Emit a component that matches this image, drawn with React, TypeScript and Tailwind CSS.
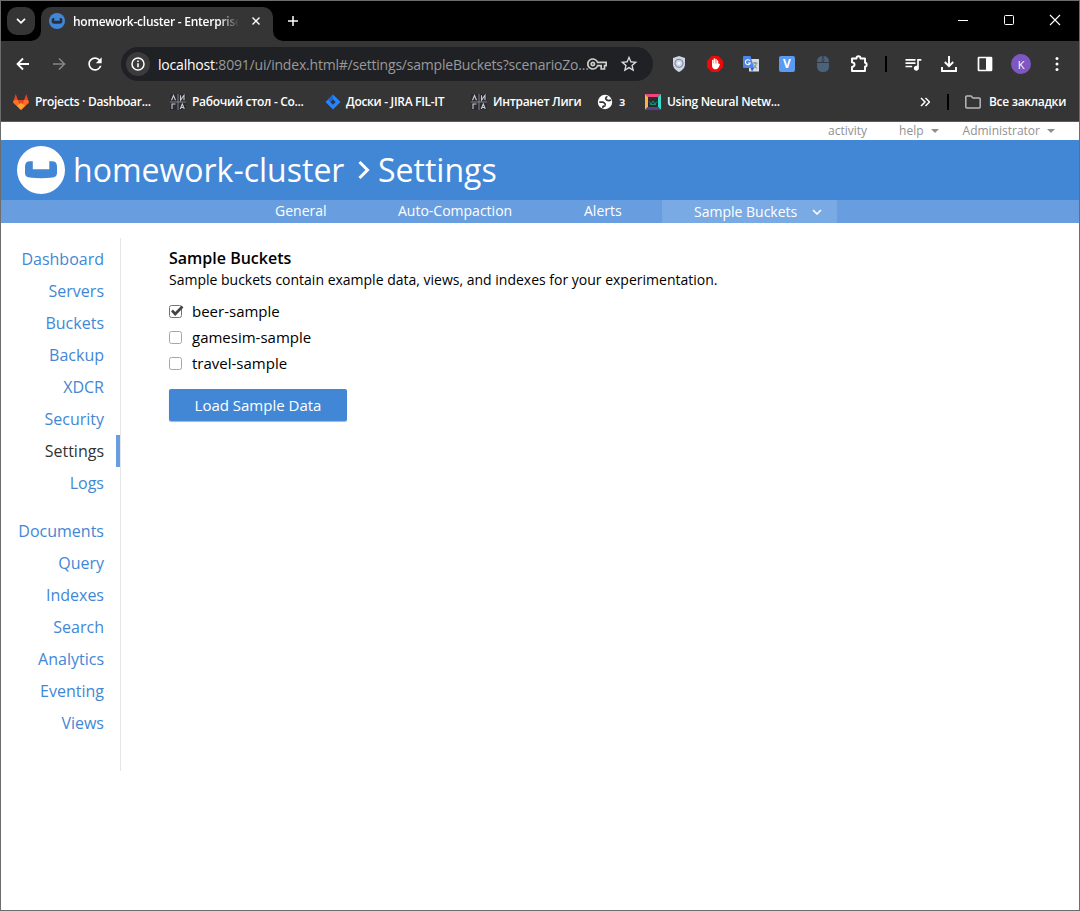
import type { ReactNode } from "react";
import { MdRefresh, MdStarBorder, MdOutlineVpnKey, MdQueueMusic } from "react-icons/md";

function Cell({ children }: { children: ReactNode }) {
  return <div className="flex h-9 w-9 shrink-0 items-center justify-center">{children}</div>;
}

function Logo({ disc, cup, className }: { disc: string; cup: string; className: string }) {
  return (
    <svg viewBox="0 0 48 48" className={className}>
      <circle cx="24" cy="24" r="24" fill={disc} />
      <path
        d="M8 20.5q0-5.2 5-5.2h2.800v8h16.500v-8H35q5 0 5 5.200V27q0 4-4.500 4.500-11.500 1.300-23 0Q8 31 8 27Z"
        fill={cup}
      />
    </svg>
  );
}

function LigaIcon() {
  return (
    <svg viewBox="0 0 16 16" className="h-4 w-4 shrink-0" fill="none" stroke="#c9c9cd">
      <rect width="16" height="16" fill="#2a2a32" stroke="none" />
      <path d="M8 0v16M0 8h16" stroke="#8a8a90" strokeWidth="0.9" />
      <path d="M1.500 6.300 3.500 1.500l2 4.800M10.500 1.300v5l3.500-5v5M2 15v-5h3.500M10.300 15l2-5 2 5M11 13.500h2.600" strokeWidth="1.100" />
    </svg>
  );
}

function TitleBar() {
  return (
    <div className="flex h-10 shrink-0 bg-black text-white">
      <div className="mt-1.5 ml-1.5 flex h-7 w-7 items-center justify-center rounded-[10px] bg-[#353535]">
        <svg viewBox="0 0 10 10" className="h-2.5 w-2.5" fill="none" stroke="white" strokeWidth="1.700">
          <path d="M1 2.800 5 6.800 9 2.800" />
        </svg>
      </div>
      <div className="relative mt-1.5 ml-1.5 flex h-[34px] w-[232px] rounded-t-[10px] bg-[#353535]">
        <svg viewBox="0 0 10 10" className="absolute bottom-0 -left-2.5 h-2.5 w-2.5" fill="#353535">
          <path d="M10 0A10 10 0 0 1 0 10h10Z" />
        </svg>
        <svg viewBox="0 0 10 10" className="absolute -right-2.5 bottom-0 h-2.5 w-2.5" fill="#353535">
          <path d="M0 0a10 10 0 0 0 10 10H0Z" />
        </svg>
        <Logo disc="#4287d6" cup="#25303f" className="mt-1.5 ml-2 h-4 w-4" />
        <div className="mt-1.5 ml-2 h-[18px] w-[166px] overflow-hidden text-[12px] leading-[18px] font-semibold tracking-[-0.25px] whitespace-nowrap [mask-image:linear-gradient(to_right,black_88%,transparent)]">
          homework-cluster - Enterprise
        </div>
        <svg viewBox="0 0 8 8" className="mt-2.5 ml-[13px] h-2 w-2" fill="none" stroke="white" strokeWidth="1.400">
          <path d="m.5.5 7 7M7.500.5l-7 7" />
        </svg>
      </div>
      <svg viewBox="0 0 10 10" className="mt-[15px] ml-[15px] h-2.5 w-2.5" fill="none" stroke="white" strokeWidth="1.500">
        <path d="M5 0v10M0 5h10" />
      </svg>
      <div className="ml-auto flex pr-[1px]">
        <svg viewBox="0 0 46 40" className="h-10 w-[46px]" stroke="white">
          <path d="M18 19.500h10" />
        </svg>
        <svg viewBox="0 0 46 40" className="h-10 w-[46px]" stroke="white" fill="none">
          <rect x="18.500" y="14.500" width="9" height="9" rx="1" />
        </svg>
        <svg viewBox="0 0 46 40" className="h-10 w-[46px]" stroke="white" fill="none">
          <path d="m18 14 10 10m0-10L18 24" strokeWidth="1.100" />
        </svg>
      </div>
    </div>
  );
}

function Toolbar() {
  return (
    <div className="flex h-[46px] shrink-0 items-center bg-[#353535] pl-1 text-white">
      <Cell>
        <svg viewBox="0 0 16 16" className="h-4 w-4" fill="none" stroke="white" strokeWidth="1.800">
          <path d="M14 8H3M8 2.500 2.500 8 8 13.500" />
        </svg>
      </Cell>
      <Cell>
        <svg viewBox="0 0 16 16" className="h-4 w-4" fill="none" stroke="#868686" strokeWidth="1.600">
          <path d="M2 8h11M8 2.500 13.500 8 8 13.500" />
        </svg>
      </Cell>
      <Cell>
        <MdRefresh className="h-5 w-5" />
      </Cell>
      <div className="ml-2 flex h-[34px] w-[532px] items-center rounded-full bg-[#202124] pl-[5px]">
        <div className="flex h-6 w-6 items-center justify-center rounded-full bg-[#3b3b3b]">
          <svg viewBox="0 0 14 14" className="h-3.5 w-3.5" fill="none" stroke="white" strokeWidth="1.500">
            <circle cx="7" cy="7" r="6" />
            <path d="M7 6.300v4M7 3.500V5" strokeWidth="1.600" />
          </svg>
        </div>
        <div className="ml-2 w-[421px] text-[14px] tracking-[-0.2px] whitespace-nowrap text-[#9a9a9a]">
          <span className="text-white">localhost</span>:8091/ui/index.html#/settings/sampleBuckets?scenarioZo...
        </div>
        <div className="flex w-9 justify-center">
          <MdOutlineVpnKey className="h-5 w-5 text-[#cfcfcf]" />
        </div>
        <div className="flex w-7 justify-center">
          <MdStarBorder className="h-5 w-5 text-[#dcdcdc]" />
        </div>
      </div>
      <div className="ml-2 flex items-center">
        <Cell>
          <svg viewBox="0 0 16 16" className="h-4 w-4">
            <path d="M8 0 14 2v6c0 4-3 6.500-6 8-3-1.500-6-4-6-8V2Z" fill="#cfd6e4" />
            <circle cx="8" cy="7.300" r="4" fill="none" stroke="#8490a8" strokeWidth="1.200" />
            <circle cx="8" cy="7.300" r="1.500" fill="#f4f6fa" />
          </svg>
        </Cell>
        <Cell>
          <svg viewBox="0 0 16 16" className="h-4 w-4">
            <path d="M4.700 0h6.600L16 4.700v6.600L11.300 16H4.700L0 11.300V4.700Z" fill="#ed0a0a" />
            <path
              d="M5.700 9V4.500M7.300 8V3M9 8V3.500M10.600 9V5"
              stroke="white"
              strokeWidth="1.300"
              strokeLinecap="round"
            />
            <path d="M5 7.500h6.300L13 8c-.5 2-1.800 5.300-4.500 5.300S5 11 5 9Z" fill="white" />
          </svg>
        </Cell>
        <Cell>
          <svg viewBox="0 0 16 16" className="h-4 w-4">
            <rect x="6" y="3" width="10" height="12.500" rx="0.500" fill="#d8dce0" />
            <path d="M9.500 7h5M12 6v1.500M10 12.500c2-1 3-3 3.300-5M10.500 8.500c1 2 2 3 3.500 3.800" stroke="#607d8b" strokeWidth="0.900" fill="none" />
            <path d="M1 0h6.500l3.500 12H1a1 1 0 0 1-1-1V1a1 1 0 0 1 1-1Z" fill="#4b86ec" />
            <path d="m7.500 12 3.500 0-2 3.500Z" fill="#2d5dc7" />
            <path d="M7 4.800A2.500 2.500 0 1 0 7.300 7H5" stroke="white" strokeWidth="1.100" fill="none" />
          </svg>
        </Cell>
        <Cell>
          <div className="flex h-4 w-4 items-center justify-center rounded-[2px] bg-[#5a9af0] text-[12px] leading-none font-bold">V</div>
        </Cell>
        <Cell>
          <svg viewBox="0 0 16 16" className="h-4 w-4">
            <rect x="2" y="0" width="12" height="16" rx="5.500" fill="#4b6278" />
            <path d="M8 0v6M2 6.500h12" stroke="#303a45" strokeWidth="1.200" />
            <rect x="7" y="2" width="2" height="3" rx="1" fill="#4b6278" stroke="#303a45" strokeWidth="0.600" />
          </svg>
        </Cell>
        <Cell>
          <svg viewBox="0 0 20 20" className="h-5 w-5" fill="none" stroke="white" strokeWidth="1.900" strokeLinejoin="round">
            <path d="M3 4.500h4.500c0-3 4-3 4 0H16v4.300c2.200 0 2.200 3.700 0 3.700v4.500H3v-4c3.400-.6 3.400-4.300 0-4.800Z" />
          </svg>
        </Cell>
      </div>
      <div className="ml-[8px] h-4 w-0.5 bg-black" />
      <div className="ml-2 flex items-center">
        <Cell>
          <MdQueueMusic className="h-5 w-5" />
        </Cell>
        <Cell>
          <svg viewBox="0 0 16 16" className="h-4 w-4" fill="none" stroke="white" strokeWidth="1.900">
            <path d="M8 0v10M3.800 6 8 10.200 12.200 6M1 11v4h14v-4" />
          </svg>
        </Cell>
        <Cell>
          <svg viewBox="0 0 16 16" className="h-4 w-4">
            <rect x="1.500" y="1.500" width="13" height="13" rx="0.500" fill="none" stroke="white" strokeWidth="1.700" />
            <path d="M9 1.500h5.500v13H9Z" fill="white" />
          </svg>
        </Cell>
        <Cell>
          <div className="flex h-5 w-5 items-center justify-center rounded-full bg-[#7e57c2] text-[11px] leading-none">K</div>
        </Cell>
        <Cell>
          <svg viewBox="0 0 16 16" className="h-4 w-4" fill="white">
            <circle cx="8" cy="2.500" r="1.500" />
            <circle cx="8" cy="8" r="1.500" />
            <circle cx="8" cy="13.500" r="1.500" />
          </svg>
        </Cell>
      </div>
    </div>
  );
}

function Bookmarks() {
  return (
    <div className="flex h-[34px] shrink-0 items-center bg-[#353535] pl-3 pb-1 text-[12px] font-semibold tracking-[-0.3px] whitespace-nowrap text-white">
      <svg viewBox="0 0 16 16" className="h-4 w-4 shrink-0">
        <path d="M2.700 0 5 6h6l2.300-6L16 8.500 8 16 0 8.500Z" fill="#e24329" />
        <path d="M0 8.500 1 6h4L8 15.800ZM16 8.500 15 6h-4L8 15.800Z" fill="#fc6d26" />
        <path d="m4 11.700 4-3 4 3L8 16Z" fill="#fca326" />
      </svg>
      <span className="ml-1.5 w-[135px]">Projects · Dashboar...</span>
      <LigaIcon />
      <span className="ml-1.5 w-[133px]">Рабочий стол - Co...</span>
      <svg viewBox="0 0 16 16" className="h-4 w-4 shrink-0">
        <path d="m8 .5 7.500 7.500L8 15.500.5 8Z" fill="#2684ff" />
        <path d="M8 5.300 10.700 8 8 10.700 5.300 8Z" fill="#353535" />
        <path d="m8 .5 0 4.800L5.300 8 3 5.500Z" fill="#1868db" />
      </svg>
      <span className="ml-[5px] w-[125px]">Доски - JIRA FIL-IT</span>
      <LigaIcon />
      <span className="ml-1.5 w-[104px]">Интранет Лиги</span>
      <svg viewBox="0 0 16 16" className="h-4 w-4 shrink-0">
        <circle cx="8" cy="8" r="7.200" fill="white" />
        <path d="M2.300 8.200h3.500c2 0 1.500 2.300 3.200 2.300M14 6c-2 1-3.500.5-4.500-.3C8 4.800 8.800 3 10.500 2.500M6 14c-.5-2 1-2 2.500-2.200" stroke="#353535" strokeWidth="1.800" fill="none" />
      </svg>
      <span className="ml-1.5 w-[26px]">з</span>
      <svg viewBox="0 0 16 16" className="h-4 w-4 shrink-0">
        <rect width="16" height="16" fill="#2a2a30" />
        <path d="M0 0h16l-3 3H3Z" fill="#f0437c" />
        <path d="m0 0 3 3v10l-3 3Z" fill="#fcb04b" />
        <path d="m16 0-3 3v10l3 3Z" fill="#35dcc8" />
        <path d="M0 16h16l-3-3H3Z" fill="#59408c" />
        <path d="M4 7.500 6 10l2-3 2 3 2-2.500M5 10.500h6" stroke="#149174" fill="none" />
      </svg>
      <span className="ml-1.5 w-[253px]">Using Neural Netw...</span>
      <svg viewBox="0 0 10 10" className="h-2.5 w-2.5 shrink-0" fill="none" stroke="white" strokeWidth="1.500">
        <path d="m1 1 4 4-4 4M5.500 1l4 4-4 4" />
      </svg>
      <div className="ml-[17px] h-4 w-0.5 bg-black" />
      <svg viewBox="0 0 16 16" className="ml-4 h-4 w-4 shrink-0" fill="none" stroke="#b8b8b8" strokeWidth="1.500">
        <path d="M.8 3a1 1 0 0 1 1-1H6l2 2h6.200a1 1 0 0 1 1 1v8a1 1 0 0 1-1 1H1.800a1 1 0 0 1-1-1Z" />
      </svg>
      <span className="ml-2">Все закладки</span>
    </div>
  );
}

function Caret({ className }: { className: string }) {
  return (
    <svg viewBox="0 0 8 4" className={className} fill="#8f8f8f">
      <path d="M0 0h8L4 4Z" />
    </svg>
  );
}

function SideLink({ label, active = false }: { label: string; active?: boolean }) {
  return (
    <a
      className={
        active
          ? "block h-8 border-r-4 border-[#689ee0] pr-3 text-right leading-8 text-[#333]"
          : "block h-8 pr-4 text-right leading-8 text-[#4287d6]"
      }
    >
      {label}
    </a>
  );
}

function Check({ label, checked = false }: { label: string; checked?: boolean }) {
  return (
    <label className="flex h-[26px] items-center">
      <svg viewBox="0 0 16 14" className="h-3.5 w-4 shrink-0" fill="none">
        <rect x="0.500" y="1.500" width="12" height="12" rx="2" fill="white" stroke={checked ? "#757575" : "#a6a6a6"} />
        {checked && <path d="m3 6.500 3.200 3.500L13.500 2.500" stroke="#444" strokeWidth="2.600" />}
      </svg>
      <span className="ml-[7px]">{label}</span>
    </label>
  );
}

const primary = ["Dashboard", "Servers", "Buckets", "Backup", "XDCR", "Security", "Settings", "Logs"];
const secondary = ["Documents", "Query", "Indexes", "Search", "Analytics", "Eventing", "Views"];

export default function App() {
  return (
    <div className="flex h-[911px] w-[1080px] flex-col overflow-hidden border border-[#6d6d6d] bg-white font-['Open_Sans',sans-serif]">
      <TitleBar />
      <Toolbar />
      <Bookmarks />
      <div className="h-px shrink-0 bg-[#5c5c5c]" />
      <div className="flex h-[18px] shrink-0 items-center justify-end pr-6 text-[12px] leading-[18px] text-[#919191]">
        <span>activity</span>
        <span className="ml-8">help</span>
        <Caret className="ml-[7px] h-1 w-2" />
        <span className="ml-6">Administrator</span>
        <Caret className="ml-[7px] h-1 w-2" />
      </div>
      <header className="flex h-[60px] shrink-0 items-center bg-[#4287d6] pl-4 text-[32px] leading-[60px] whitespace-nowrap text-white">
        <Logo disc="white" cup="#4287d6" className="h-12 w-12 shrink-0" />
        <span className="ml-2 w-[278px]">homework-cluster</span>
        <svg viewBox="0 0 12 20" className="ml-[7px] h-5 w-3 shrink-0" fill="none" stroke="white" strokeWidth="3">
          <path d="m1.500 2 8 8-8 8" />
        </svg>
        <span className="ml-2">Settings</span>
      </header>
      <nav className="flex h-[23px] shrink-0 bg-[#689ee0] pl-[274px] text-[14px] leading-[22px] whitespace-nowrap text-white">
        <a className="w-[123px]">General</a>
        <a className="w-[186px]">Auto-Compaction</a>
        <a className="w-[78px]">Alerts</a>
        <a className="flex w-[175px] items-center bg-[#7aaae4] pl-8">
          Sample Buckets
          <svg viewBox="0 0 10 6" className="ml-[15px] h-1.5 w-2.5" fill="none" stroke="white" strokeWidth="1.600">
            <path d="m1 1 4 4 4-4" />
          </svg>
        </a>
      </nav>
      <div className="flex pt-[15px]">
        <aside className="h-[533px] w-[120px] border-r border-[#e6e6e6] pt-[5px] text-[16px]">
          {primary.map((label) => (
            <SideLink key={label} label={label} active={label === "Settings"} />
          ))}
          <div className="h-4" />
          {secondary.map((label) => (
            <SideLink key={label} label={label} />
          ))}
        </aside>
        <main className="pl-12 text-black">
          <h1 className="mt-2 h-6 text-[16px] leading-6 font-semibold">Sample Buckets</h1>
          <p className="h-5 text-[14px] leading-5">
            Sample buckets contain example data, views, and indexes for your experimentation.
          </p>
          <div className="mt-2 text-[15px]">
            <Check label="beer-sample" checked />
            <Check label="gamesim-sample" />
            <Check label="travel-sample" />
          </div>
          <button className="mt-[13px] block h-8 w-[178px] rounded-[2px] bg-[#4287d6] text-[15px] leading-8 text-white shadow-[0_1px_1px_rgba(0,0,0,0.3)]">
            Load Sample Data
          </button>
        </main>
      </div>
    </div>
  );
}
